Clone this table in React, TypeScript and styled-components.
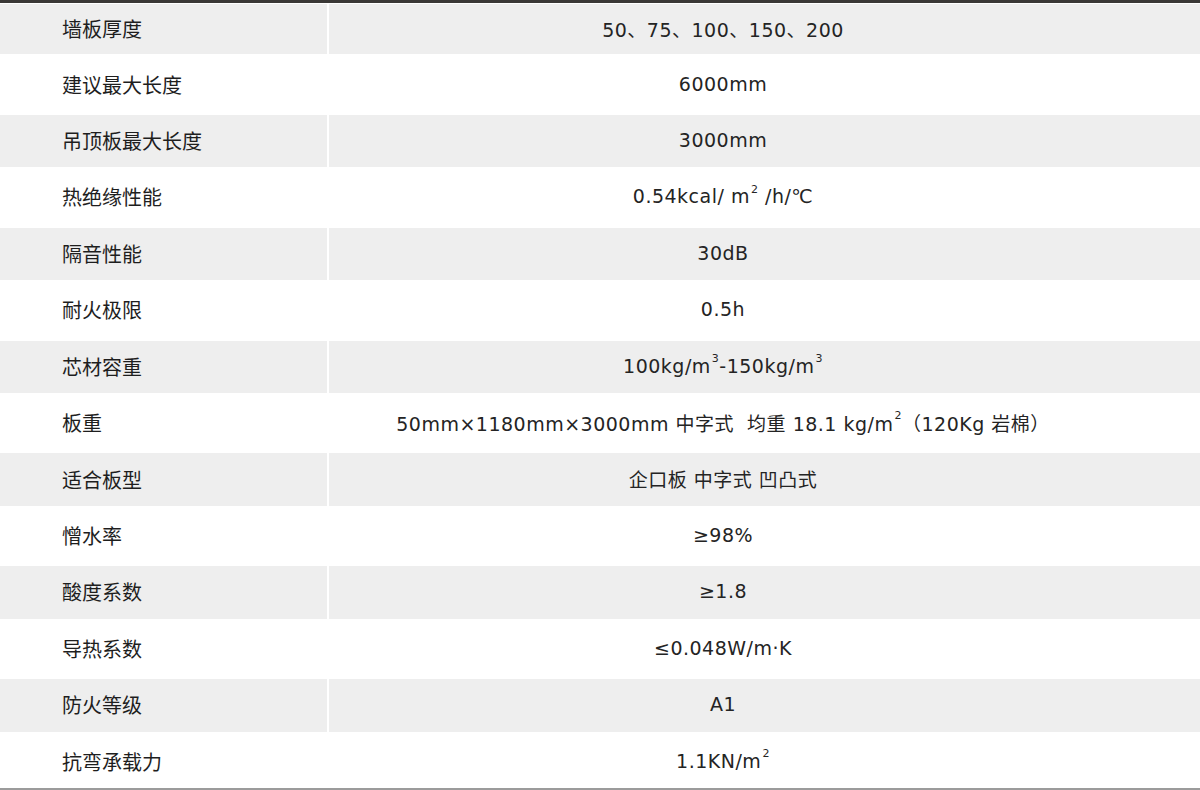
import React from 'react';
import styled, { createGlobalStyle } from 'styled-components';

const GlobalStyle = createGlobalStyle`
  html, body {
    margin: 0;
    padding: 0;
    background: #ffffff;
  }
  body {
    font-family: "Noto Sans", "Noto Sans CJK SC", sans-serif;
    color: #1e1e1e;
  }
`;

type Spec = { label: string; value: React.ReactNode };

const Sup = styled.span`
  font-size: 0.58em;
  position: relative;
  top: -0.62em;
  margin-left: 1px;
`;

const specs: Spec[] = [
  { label: '墙板厚度', value: '50、75、100、150、200' },
  { label: '建议最大长度', value: '6000mm' },
  { label: '吊顶板最大长度', value: '3000mm' },
  {
    label: '热绝缘性能',
    value: (
      <>
        0.54kcal/ m<Sup>2</Sup>&nbsp;/h/℃
      </>
    ),
  },
  { label: '隔音性能', value: '30dB' },
  { label: '耐火极限', value: '0.5h' },
  {
    label: '芯材容重',
    value: (
      <>
        100kg/m<Sup>3</Sup>-150kg/m<Sup>3</Sup>
      </>
    ),
  },
  {
    label: '板重',
    value: (
      <>
        50mm×1180mm×3000mm 中字式&nbsp;&nbsp;均重 18.1 kg/m<Sup>2</Sup>（120Kg 岩棉）
      </>
    ),
  },
  { label: '适合板型', value: '企口板 中字式 凹凸式' },
  { label: '憎水率', value: '≥98%' },
  { label: '酸度系数', value: '≥1.8' },
  { label: '导热系数', value: '≤0.048W/m·K' },
  { label: '防火等级', value: 'A1' },
  {
    label: '抗弯承载力',
    value: (
      <>
        1.1KN/m<Sup>2</Sup>
      </>
    ),
  },
];

// top and bottom rules are drawn under the rows, so the first and last rows
// run right up to the edge of the picture
const Table = styled.div`
  box-sizing: border-box;
  width: 1200px;
  height: 790px;
  display: grid;
  grid-template-rows: repeat(14, 1fr);
  background: #ffffff;
  box-shadow: inset 0 3px 0 #3a3836, inset 0 -2px 0 #9b9b9b;
  overflow: hidden;
`;

const Row = styled.div<{ $shaded: boolean }>`
  display: grid;
  grid-template-columns: 327px 1fr;
  column-gap: 2px;
  padding: ${(p) => (p.$shaded ? '2px 0' : '0')};
  --cell-bg: ${(p) => (p.$shaded ? '#eeeeee' : 'transparent')};

  &:first-child {
    padding: 4px 0 2px;
  }
`;

const Label = styled.div`
  background: var(--cell-bg);
  display: flex;
  align-items: center;
  padding-left: 62px;
  padding-bottom: 1px;
  font-family: "Noto Sans CJK SC", sans-serif;
  font-size: 20px;
  color: #1e1e1e;
`;

const Value = styled.div`
  background: var(--cell-bg);
  display: flex;
  align-items: center;
  justify-content: center;
  padding-right: 83px;
  padding-bottom: 2px;
  font-family: "DejaVu Sans", "Noto Sans CJK SC", sans-serif;
  font-size: 19px;
  letter-spacing: 0.5px;
  color: #242424;
  white-space: nowrap;
`;

function App() {
  return (
    <>
      <GlobalStyle />
      <Table>
        {specs.map((s, i) => (
          <Row key={s.label} $shaded={i % 2 === 0}>
            <Label>{s.label}</Label>
            <Value>{s.value}</Value>
          </Row>
        ))}
      </Table>
    </>
  );
}

export default App;
